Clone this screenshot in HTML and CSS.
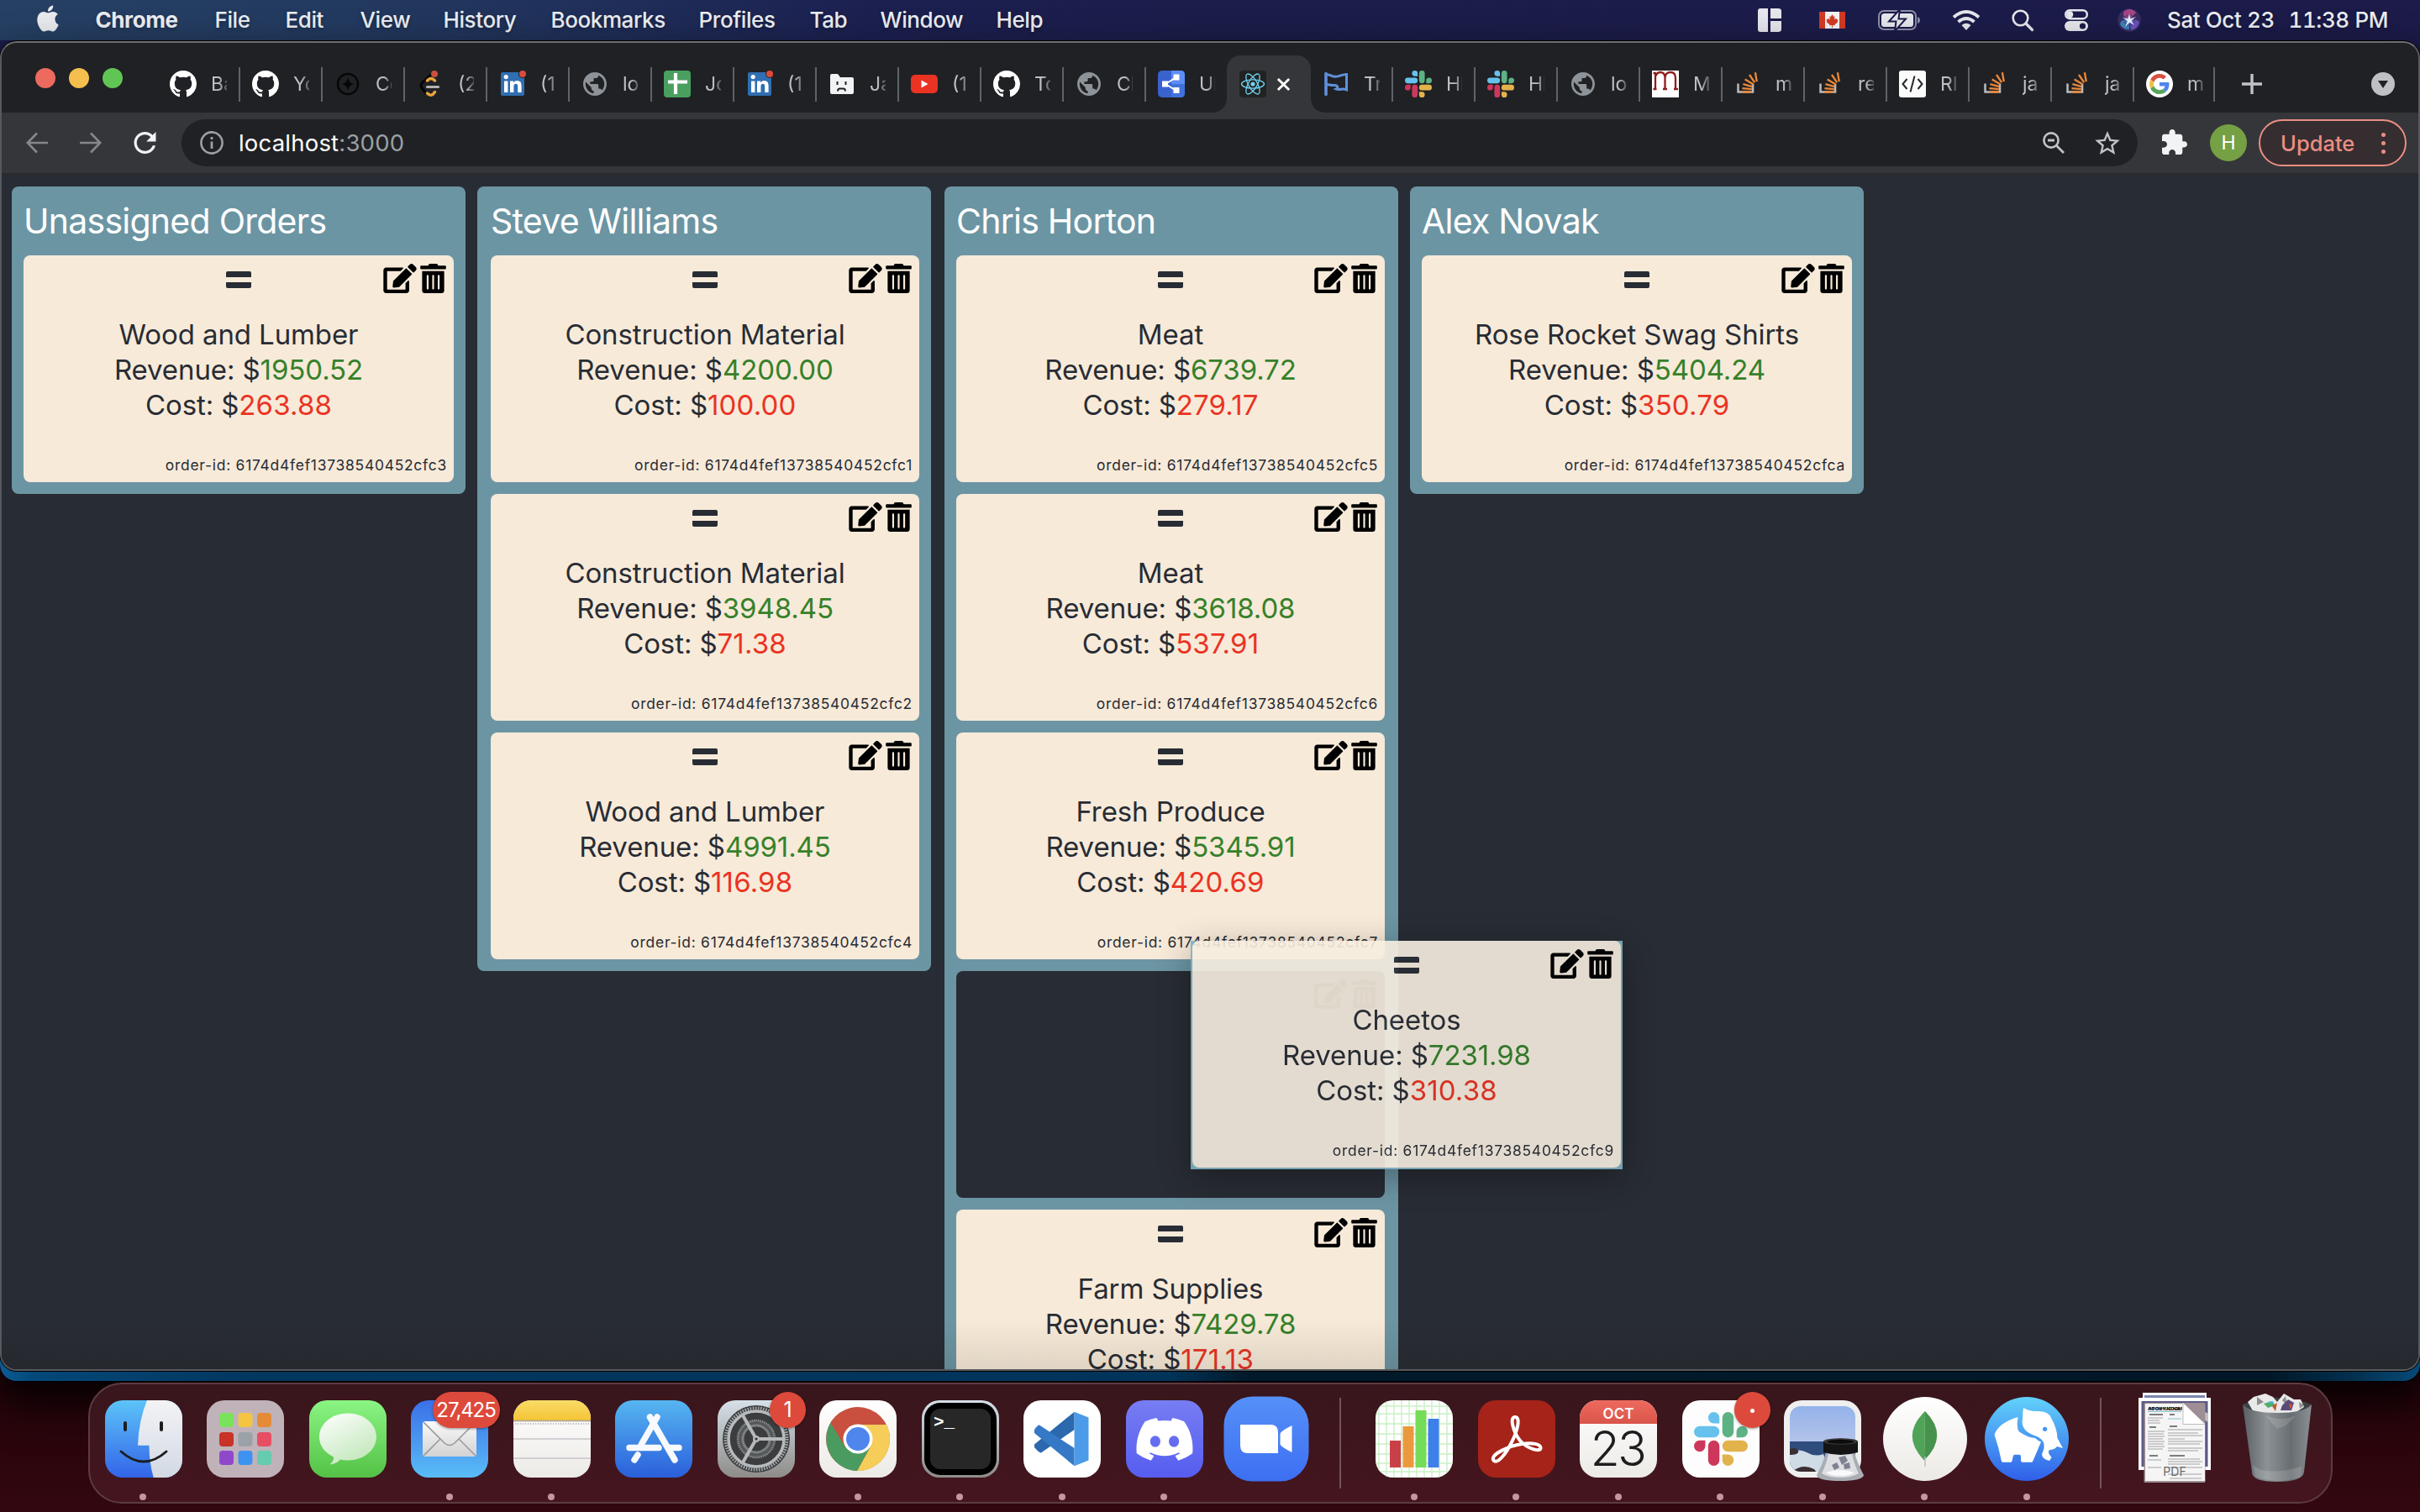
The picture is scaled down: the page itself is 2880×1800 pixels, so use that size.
FILE: index.html
```html
<!DOCTYPE html>
<html lang="en">
<head>
<meta charset="utf-8">
<title>Order board</title>
<link rel="stylesheet" href="styles.css">
</head>
<body>
<svg class="defs" width="0" height="0" aria-hidden="true">
  <defs>
    <linearGradient id="gBlueUp" x1="0" y1="0" x2="0" y2="1"><stop offset="0" stop-color="#5cc4f8"/><stop offset="1" stop-color="#3364e8"/></linearGradient>
    <linearGradient id="gPale" x1="0" y1="0" x2="0" y2="1"><stop offset="0" stop-color="#f3f3f5"/><stop offset="1" stop-color="#d2d9e4"/></linearGradient>
    <linearGradient id="gGreen" x1="0" y1="0" x2="0" y2="1"><stop offset="0" stop-color="#8af583"/><stop offset="1" stop-color="#54c146"/></linearGradient>
    <linearGradient id="gBubble" x1="0" y1="0" x2=".6" y2="1"><stop offset="0" stop-color="#fff"/><stop offset="1" stop-color="#c4e8bd"/></linearGradient>
    <linearGradient id="gMail" x1="0" y1="0" x2="0" y2="1"><stop offset="0" stop-color="#3a6fe8"/><stop offset="1" stop-color="#59bdf7"/></linearGradient>
    <linearGradient id="gEnv" x1="0" y1="0" x2="0" y2="1"><stop offset="0" stop-color="#fafafa"/><stop offset="1" stop-color="#d2d2d4"/></linearGradient>
    <linearGradient id="gNote" x1="0" y1="0" x2="0" y2="1"><stop offset="0" stop-color="#f9dc67"/><stop offset="1" stop-color="#f4c436"/></linearGradient>
    <linearGradient id="gStore" x1="0" y1="0" x2="0" y2="1"><stop offset="0" stop-color="#56b6f1"/><stop offset="1" stop-color="#2a5fdb"/></linearGradient>
    <linearGradient id="gGrey" x1="0" y1="0" x2="0" y2="1"><stop offset="0" stop-color="#d5e0e8"/><stop offset="1" stop-color="#8e8c89"/></linearGradient>
    <linearGradient id="gDiscord" x1="0" y1="0" x2="0" y2="1"><stop offset="0" stop-color="#777df2"/><stop offset="1" stop-color="#565df0"/></linearGradient>
    <linearGradient id="gZoom" x1="0" y1="0" x2="0" y2="1"><stop offset="0" stop-color="#5590f8"/><stop offset="1" stop-color="#3d6ff2"/></linearGradient>
    <linearGradient id="gPaper" x1="0" y1="0" x2="0" y2="1"><stop offset="0" stop-color="#fff"/><stop offset="1" stop-color="#eceae6"/></linearGradient>
    <linearGradient id="gCal" x1="0" y1="0" x2="0" y2="1"><stop offset="0" stop-color="#ee6a5f"/><stop offset="1" stop-color="#d9554a"/></linearGradient>
    <linearGradient id="gEle" x1="0" y1="0" x2="0" y2="1"><stop offset="0" stop-color="#62d2fb"/><stop offset="1" stop-color="#2f5fe8"/></linearGradient>
    <linearGradient id="gBin" x1="0" y1="0" x2="1" y2="0"><stop offset="0" stop-color="#5a5f63"/><stop offset=".35" stop-color="#8c9296"/><stop offset=".7" stop-color="#686d71"/><stop offset="1" stop-color="#8a9094"/></linearGradient>
    <linearGradient id="gSky" x1="0" y1="0" x2="0" y2="1"><stop offset="0" stop-color="#94b3ea"/><stop offset="1" stop-color="#b4c3ea"/></linearGradient>
    <radialGradient id="gSiri"><stop offset="0" stop-color="#fff"/><stop offset=".3" stop-color="#8fb9e8"/><stop offset=".65" stop-color="#5a4fa0"/><stop offset="1" stop-color="#2a2350"/></radialGradient>
    <clipPath id="squircle"><rect x="8" y="8" width="92" height="92" rx="21"/></clipPath>
    <clipPath id="photo"><rect x="15" y="15" width="78" height="78" rx="13"/></clipPath>

    <symbol id="github" viewBox="0 0 16 16"><path fill="#fff" d="M8 0C3.58 0 0 3.58 0 8c0 3.54 2.29 6.53 5.47 7.59.4.07.55-.17.55-.38 0-.19-.01-.82-.01-1.49-2.01.37-2.53-.49-2.69-.94-.09-.23-.48-.94-.82-1.13-.28-.15-.68-.52-.01-.53.63-.01 1.08.58 1.23.82.72 1.21 1.87.87 2.33.66.07-.52.28-.87.51-1.07-1.78-.2-3.64-.89-3.64-3.95 0-.87.31-1.59.82-2.15-.08-.2-.36-1.02.08-2.12 0 0 .67-.21 2.2.82.64-.18 1.32-.27 2-.27.68 0 1.36.09 2 .27 1.53-1.04 2.2-.82 2.2-.82.44 1.1.16 1.92.08 2.12.51.56.82 1.27.82 2.15 0 3.07-1.87 3.75-3.65 3.95.29.25.54.73.54 1.48 0 1.07-.01 1.93-.01 2.2 0 .21.15.46.55.38A8.013 8.013 0 0016 8c0-4.42-3.58-8-8-8z"/></symbol>
    <symbol id="compass" viewBox="0 0 32 32"><circle cx="16" cy="16" r="12" fill="none" stroke="#060606" stroke-width="2.4"/><path fill="#060606" d="M16 8q1 7 7 8q-6 1-7 8q-1-7-7-8q6-1 7-8z"/></symbol>
    <symbol id="leetcode" viewBox="0 0 32 32"><path d="M19 3L6.500 14.500q-3 3.500 0 7L12 28" fill="none" stroke="#050505" stroke-width="3"/><path d="M12.500 12q4.500-5 9 0M12.500 27q5 5 9-1.500" fill="none" stroke="#e8a33d" stroke-width="3.400" stroke-linecap="round"/><path d="M12.500 19.500h13" stroke="#b3b3b3" stroke-width="3.200" stroke-linecap="round"/><circle cx="21" cy="4" r="4" fill="#c8503f"/></symbol>
    <symbol id="linkedin" viewBox="0 0 32 32"><rect x="2" y="2" width="28" height="28" rx="2" fill="#2f6fb2"/><circle cx="8.2" cy="7.6" r="2.6" fill="#fff"/><path fill="#fff" d="M6 12.4h4.4V26H6zM13 12.4h4.2v1.9q1.400-2.300 4.400-2.300 5 0 5 6V26h-4.400v-7q0-3.200-2.300-3.200-2.500 0-2.500 3.200v7H13z"/><circle cx="28" cy="4" r="5" fill="#202124"/><circle cx="28" cy="4" r="4" fill="#dd4b3b"/></symbol>
    <symbol id="globe" viewBox="0 0 24 24"><path fill="#8d9398" transform="translate(12 12) scale(1.05) translate(-12 -12)" d="M12 2C6.480 2 2 6.480 2 12s4.480 10 10 10 10-4.480 10-10S17.520 2 12 2zm-1 17.930c-3.950-.49-7-3.850-7-7.930 0-.62.08-1.210.21-1.790L9 15v1c0 1.100.9 2 2 2v1.930zm6.900-2.540c-.26-.81-1-1.390-1.900-1.390h-1v-3c0-.55-.45-1-1-1H8v-2h2c.55 0 1-.45 1-1V7h2c1.100 0 2-.9 2-2v-.41c2.930 1.190 5 4.060 5 7.410 0 2.080-.8 3.970-2.100 5.390z"/></symbol>
    <symbol id="sheet" viewBox="0 0 32 32"><rect width="32" height="32" rx="4" fill="#4a9f5f"/><path d="M14 3v25M5 13.500h23" stroke="#fff" stroke-width="4.200"/></symbol>
    <symbol id="sadfile" viewBox="0 0 32 32"><path fill="#f1f3f4" d="M2 6q0-2 2-2h7l3 4h14q2 0 2 2v16q0 2-2 2H4q-2 0-2-2z"/><path d="M10.500 13v4M20.500 13v4M11 24.500q0-3 2.500-3h4q2.500 0 2.500 3" fill="none" stroke="#202124" stroke-width="2"/></symbol>
    <symbol id="youtube" viewBox="0 0 32 32"><rect y="5" width="32" height="22" rx="5" fill="#ea3323"/><path fill="#fff" d="M12.500 11.500l8 4.500-8 4.500z"/></symbol>
    <symbol id="share" viewBox="0 0 32 32"><rect width="32" height="32" rx="5" fill="#3a62cf"/><path d="M16 0h11q5 0 5 5v11H16z" fill="#5d8df6"/><path d="M16 16h16v11q0 5-5 5H16z" fill="#3f72dc"/><path d="M22 8L9 16l13 8" fill="none" stroke="#fff" stroke-width="2"/><path fill="#fff" d="M5 12.500h7v7H5zM18.500 4.500h7v7h-7zM18.500 20h7v7h-7z"/></symbol>
    <symbol id="react" viewBox="0 0 32 32"><rect width="32" height="32" rx="4" fill="#222"/><g fill="none" stroke="#6fd3f2" stroke-width="1.300"><ellipse cx="16" cy="16" rx="13.500" ry="5.200"/><ellipse cx="16" cy="16" rx="13.500" ry="5.200" transform="rotate(60 16 16)"/><ellipse cx="16" cy="16" rx="13.500" ry="5.200" transform="rotate(120 16 16)"/></g><circle cx="16" cy="16" r="2.600" fill="#6fd3f2"/></symbol>
    <symbol id="flag" viewBox="0 0 32 32"><path d="M4 28.500V3.500" stroke="#6090dc" stroke-width="3.600" stroke-linecap="round"/><path d="M4 4.500c5 0 6.500 2.800 11.500 2.800S23 4.500 28.500 4.500v18.300c-5-2.200-8 1.200-12.500-.8 4-2 1-5-2.500-4.500-4 .5-5.500-1-9.500-1" fill="none" stroke="#6090dc" stroke-width="3"/></symbol>
    <symbol id="slack" viewBox="0 0 24 24"><path fill="#ce375c" d="M5.042 15.165a2.528 2.528 0 0 1-2.520 2.523A2.528 2.528 0 0 1 0 15.165a2.527 2.527 0 0 1 2.522-2.520h2.520v2.520zM6.313 15.165a2.527 2.527 0 0 1 2.521-2.520 2.527 2.527 0 0 1 2.521 2.520v6.313A2.528 2.528 0 0 1 8.834 24a2.528 2.528 0 0 1-2.521-2.522v-6.313z"/><path fill="#66c2ec" d="M8.834 5.042a2.528 2.528 0 0 1-2.521-2.520A2.528 2.528 0 0 1 8.834 0a2.528 2.528 0 0 1 2.521 2.522v2.520H8.834zM8.834 6.313a2.528 2.528 0 0 1 2.521 2.521 2.528 2.528 0 0 1-2.521 2.521H2.522A2.528 2.528 0 0 1 0 8.834a2.528 2.528 0 0 1 2.522-2.521h6.312z"/><path fill="#5cb283" d="M18.956 8.834a2.528 2.528 0 0 1 2.522-2.521A2.528 2.528 0 0 1 24 8.834a2.528 2.528 0 0 1-2.522 2.521h-2.522V8.834zM17.688 8.834a2.528 2.528 0 0 1-2.523 2.521 2.527 2.527 0 0 1-2.520-2.521V2.522A2.527 2.527 0 0 1 15.165 0a2.528 2.528 0 0 1 2.523 2.522v6.312z"/><path fill="#e2b34c" d="M15.165 18.956a2.528 2.528 0 0 1 2.523 2.522A2.528 2.528 0 0 1 15.165 24a2.527 2.527 0 0 1-2.520-2.522v-2.522h2.520zM15.165 17.688a2.527 2.527 0 0 1-2.520-2.523 2.526 2.526 0 0 1 2.520-2.520h6.313A2.527 2.527 0 0 1 24 15.165a2.528 2.528 0 0 1-2.522 2.523h-6.313z"/></symbol>
    <symbol id="mfile" viewBox="0 0 32 32"><rect width="32" height="32" fill="#fff"/><path d="M4 2v20M1.500 3H4M4 7q2-5 6-5 5 0 5.500 6v14M15.500 8q1-6 6.500-6 6 0 6 7v13M1.500 22h4M13 22h5M26 22h5" fill="none" stroke="#8d1e1c" stroke-width="2.300"/></symbol>
    <symbol id="so" viewBox="0 0 24 24"><path fill="#b9bbbd" d="M15 15v7H3v-7H1v9h16v-9z" transform="translate(1.500 -2.500) scale(.94)"/><path fill="#e9873a" transform="translate(2.500 1.500) scale(.88)" d="M15 21h-10v-2h10v2zm6-11.665l-1.621-9.335-1.993.346 1.620 9.335 1.994-.346zm-5.964 6.937l-9.746-.975-.186 2.016 9.755.879.177-1.920zm.538-2.587l-9.276-2.608-.526 1.954 9.306 2.500.496-1.846zm1.204-2.413l-8.297-4.864-1.029 1.743 8.298 4.865 1.028-1.744zm1.866-1.467l-5.339-7.829-1.672 1.140 5.339 7.829 1.672-1.140z"/></symbol>
    <symbol id="code" viewBox="0 0 32 32"><rect width="32" height="32" rx="3" fill="#fbfbfb"/><path d="M9.500 10L4.500 16l5 6M22.500 10l5 6-5 6M18.500 6.500l-5 19" fill="none" stroke="#26282b" stroke-width="2"/></symbol>
    <symbol id="google" viewBox="0 0 32 32"><circle cx="16" cy="16" r="16" fill="#fff"/><g transform="translate(4 4) scale(.5)"><path fill="#d94f3e" d="M24 9.500c3.540 0 6.710 1.220 9.210 3.600l6.850-6.850C35.900 2.380 30.470 0 24 0 14.620 0 6.510 5.380 2.560 13.220l7.980 6.190C12.430 13.720 17.740 9.500 24 9.500z"/><path fill="#5384ec" d="M46.980 24.550c0-1.570-.15-3.090-.38-4.550H24v9.020h12.940c-.58 2.960-2.260 5.480-4.780 7.180l7.730 6c4.510-4.180 7.090-10.360 7.090-17.650z"/><path fill="#f2be42" d="M10.530 28.590c-.48-1.450-.76-2.990-.76-4.590s.27-3.140.76-4.590l-7.980-6.190C.92 16.460 0 20.120 0 24c0 3.880.92 7.540 2.560 10.780l7.970-6.190z"/><path fill="#58a55c" d="M24 48c6.480 0 11.930-2.130 15.890-5.810l-7.730-6c-2.150 1.450-4.920 2.300-8.160 2.300-6.260 0-11.570-4.220-13.470-9.910l-7.980 6.190C6.510 42.620 14.620 48 24 48z"/></g></symbol>

    <symbol id="edit" viewBox="0 0 576 512"><path d="M402.600 83.200l90.200 90.200c3.800 3.800 3.800 10 0 13.800L274.400 405.600l-92.800 10.300c-12.400 1.400-22.900-9.100-21.500-21.500l10.300-92.800L388.800 83.200c3.800-3.800 10-3.800 13.800 0zm162-22.900l-48.800-48.800c-15.200-15.200-39.900-15.200-55.200 0l-35.400 35.400c-3.800 3.800-3.800 10 0 13.800l90.200 90.200c3.800 3.800 10 3.800 13.800 0l35.400-35.400c15.200-15.300 15.200-40 0-55.200zM384 346.200V448H64V128h229.800c3.200 0 6.200-1.300 8.500-3.500l40-40c7.600-7.600 2.200-20.500-8.500-20.500H48C21.500 64 0 85.500 0 112v352c0 26.500 21.500 48 48 48h352c26.500 0 48-21.500 48-48V306.200c0-10.700-12.900-16-20.500-8.500l-40 40c-2.200 2.300-3.500 5.300-3.500 8.500z"/></symbol>
    <symbol id="trash" viewBox="0 0 448 512"><path d="M32 464a48 48 0 0 0 48 48h288a48 48 0 0 0 48-48V128H32zm272-256a16 16 0 0 1 32 0v224a16 16 0 0 1-32 0zm-96 0a16 16 0 0 1 32 0v224a16 16 0 0 1-32 0zm-96 0a16 16 0 0 1 32 0v224a16 16 0 0 1-32 0zM432 32H312l-9.400-18.700A24 24 0 0 0 281.100 0H166.800a23.720 23.720 0 0 0-21.400 13.300L136 32H16A16 16 0 0 0 0 48v32a16 16 0 0 0 16 16h416a16 16 0 0 0 16-16V48a16 16 0 0 0-16-16z"/></symbol>
  </defs>
</svg>

<header class="menubar">
  <svg class="apple" viewBox="2 0 20 24"><path fill="#e9ebef" d="M12.152 6.896c-.948 0-2.415-1.078-3.960-1.040-2.040.027-3.910 1.183-4.961 3.014-2.117 3.675-.546 9.103 1.519 12.090 1.013 1.454 2.208 3.090 3.792 3.039 1.520-.065 2.090-.987 3.935-.987 1.831 0 2.350.987 3.960.948 1.637-.026 2.676-1.480 3.676-2.948 1.156-1.688 1.636-3.325 1.662-3.415-.039-.013-3.182-1.221-3.220-4.857-.026-3.040 2.480-4.494 2.597-4.559-1.429-2.090-3.623-2.324-4.390-2.376-2-.156-3.675 1.090-4.610 1.090zM15.530 3.830c.843-1.012 1.400-2.427 1.245-3.830-1.207.052-2.662.805-3.532 1.818-.78.896-1.454 2.338-1.273 3.714 1.338.104 2.715-.688 3.559-1.701"/></svg>
  <nav class="menus"><b>Chrome</b><span>File</span><span>Edit</span><span>View</span><span>History</span><span>Bookmarks</span><span>Profiles</span><span>Tab</span><span>Window</span><span>Help</span></nav>
  <div class="status">
    <svg class="st-split" viewBox="0 0 30 28"><path fill="#e6e7ec" d="M4 0h9v28H4q-3 0-3-3V3q0-3 3-3zM16 0h9q4 0 4 3v9H16zM16 15h13v10q0 3-4 3h-9z"/></svg>
    <svg class="st-flag" viewBox="0 0 31 20"><rect width="31" height="20" fill="#f4f4f4"/><path fill="#d43a24" d="M0 0h7v20H0zM24 0h7v20h-7zM15.500 3l1.500 3 1.500-.7-.5 4 2.200-1.600.6 1.500 1.700-.2-.8 2.300.8.800-4 3.200.2 1-2.800-.3v3h-.9v-3l-2.800.3.200-1-4-3.200.8-.8-.8-2.300 1.700.2.600-1.500 2.200 1.600-.5-4 1.500.7z"/></svg>
    <svg class="st-batt" viewBox="0 0 50 24"><rect x="1" y="1" width="44" height="22" rx="6" fill="none" stroke="#8d8da6" stroke-width="2"/><path d="M47 8v8q3-1 3-4t-3-4z" fill="#8d8da6"/><rect x="4" y="4" width="38" height="16" rx="3.500" fill="#e6e7ec"/><path d="M26 -1L13 13.500h8.500L20 25 33 10.500h-8.500z" fill="#e6e7ec" stroke="#1c1b4a" stroke-width="2"/></svg>
    <svg class="st-wifi" viewBox="0 0 34 24"><path d="M2 8.500q15-13 30 0M7.500 14q9.500-8 19 0" fill="none" stroke="#e6e7ec" stroke-width="3.800"/><path fill="#e6e7ec" d="M11.500 18q5.500-4.500 11 0L17 24z"/></svg>
    <svg class="st-find" viewBox="0 0 26 26"><circle cx="10.500" cy="10.500" r="8.800" fill="none" stroke="#e6e7ec" stroke-width="2.600"/><path d="M17 17l7.500 7.500" stroke="#e6e7ec" stroke-width="3.200" stroke-linecap="round"/></svg>
    <svg class="st-ctl" viewBox="0 0 28 26"><rect x="1.200" y="1.200" width="25.600" height="10" rx="5" fill="none" stroke="#e6e7ec" stroke-width="2.400"/><circle cx="6.200" cy="6.200" r="4" fill="#e6e7ec"/><rect y="14" width="28" height="12" rx="6" fill="#e6e7ec"/><circle cx="21.500" cy="20" r="3.600" fill="#1c1b4a"/></svg>
    <svg class="st-siri" viewBox="0 0 28 28"><circle cx="14" cy="14" r="13.800" fill="#3a2d62"/><path fill="#c24b8f" opacity=".8" d="M14 14Q4 10 8 3q8-5 14 2z"/><path fill="#3f8fcb" opacity=".85" d="M14 14Q4 12 3 19q4 7 11 6z"/><path fill="#6f58c9" opacity=".9" d="M14 14q10-2 12 3-3 8-10 9z"/><circle cx="14" cy="14" r="7" fill="url(#gSiri)" opacity=".4"/><path fill="#e8f4ff" d="M14 6l1.200 6.500L22 10l-5.500 4.500L20 20l-5.500-3.500L9 22l3-7L6 11l6.500 1.500z"/></svg>
    <span class="clock"><span>Sat Oct 23</span><span>11:38 PM</span></span>
  </div>
</header>

<div class="backwin"></div>
<main class="window">
  <div class="tabstrip">
    <div class="lights"><i class="red"></i><i class="amber"></i><i class="green"></i></div>
    <div class="tabs">
      <div class="tab"><svg><use href="#github"/></svg><span>Ba</span></div>
      <div class="tab"><svg><use href="#github"/></svg><span>Yo</span></div>
      <div class="tab"><svg><use href="#compass"/></svg><span>Co</span></div>
      <div class="tab"><svg><use href="#leetcode"/></svg><span>(2</span></div>
      <div class="tab"><svg><use href="#linkedin"/></svg><span>(1</span></div>
      <div class="tab"><svg><use href="#globe"/></svg><span>lo</span></div>
      <div class="tab"><svg><use href="#sheet"/></svg><span>Jo</span></div>
      <div class="tab"><svg><use href="#linkedin"/></svg><span>(1</span></div>
      <div class="tab"><svg><use href="#sadfile"/></svg><span>Ja</span></div>
      <div class="tab"><svg><use href="#youtube"/></svg><span>(1</span></div>
      <div class="tab"><svg><use href="#github"/></svg><span>To</span></div>
      <div class="tab"><svg><use href="#globe"/></svg><span>Cl</span></div>
      <div class="tab noline"><svg><use href="#share"/></svg><span>Ul</span></div>
      <div class="tab active"><svg><use href="#react"/></svg><svg class="close" viewBox="0 0 18 18"><path d="M2 2l14 14M16 2L2 16" stroke="#fff" stroke-width="3"/></svg></div>
      <div class="tab"><svg><use href="#flag"/></svg><span>Tr</span></div>
      <div class="tab"><svg><use href="#slack"/></svg><span>Hl</span></div>
      <div class="tab"><svg><use href="#slack"/></svg><span>Hl</span></div>
      <div class="tab"><svg><use href="#globe"/></svg><span>lo</span></div>
      <div class="tab"><svg><use href="#mfile"/></svg><span>M</span></div>
      <div class="tab"><svg><use href="#so"/></svg><span>m</span></div>
      <div class="tab"><svg><use href="#so"/></svg><span>re</span></div>
      <div class="tab"><svg><use href="#code"/></svg><span>RI</span></div>
      <div class="tab"><svg><use href="#so"/></svg><span>ja</span></div>
      <div class="tab"><svg><use href="#so"/></svg><span>ja</span></div>
      <div class="tab last"><svg><use href="#google"/></svg><span>m</span></div>
    </div>
    <svg class="newtab" viewBox="0 0 24 24"><path d="M12 0v24M0 12h24" stroke="#c0c3c7" stroke-width="3.400"/></svg>
    <svg class="tabmenu" viewBox="0 0 28 28"><circle cx="14" cy="14" r="14" fill="#bdc1c6"/><path d="M8 10h12l-6 9z" fill="#202124"/></svg>
  </div>

  <div class="toolbar">
    <svg class="nav back" viewBox="0 0 26 26"><path d="M26 13H2.500M13 1.500L1.800 13 13 24.500" fill="none" stroke="#85878a" stroke-width="2.600"/></svg>
    <svg class="nav fwd" viewBox="0 0 26 26"><path d="M0 13h23.500M13 1.500L24.200 13 13 24.500" fill="none" stroke="#85878a" stroke-width="2.600"/></svg>
    <svg class="nav reload" viewBox="4 4 16 16"><path fill="#f1f3f4" d="M17.650 6.350C16.200 4.900 14.210 4 12 4c-4.420 0-7.990 3.580-7.990 8s3.570 8 7.990 8c3.730 0 6.840-2.550 7.730-6h-2.080c-.82 2.330-3.040 4-5.650 4-3.310 0-6-2.690-6-6s2.690-6 6-6c1.660 0 3.140.69 4.220 1.780L13 11h7V4l-2.350 2.350z"/></svg>
    <div class="omnibox">
      <svg class="info" viewBox="0 0 28 28"><circle cx="14" cy="14" r="12.600" fill="none" stroke="#9aa0a6" stroke-width="2.600"/><path d="M14 12.500V21M14 7v3" stroke="#9aa0a6" stroke-width="2.800"/></svg>
      <span class="url">localhost<em>:3000</em></span>
      <svg class="zoomout" viewBox="0 0 26 26"><circle cx="10" cy="10" r="8.600" fill="none" stroke="#c0c3c7" stroke-width="2.600"/><path d="M16 16l9 9M6 10h8" stroke="#c0c3c7" stroke-width="2.800"/></svg>
      <svg class="star" viewBox="2 2 20 19"><path fill="#c0c3c7" d="M22 9.240l-7.190-.62L12 2 9.190 8.630 2 9.240l5.460 4.730L5.820 21 12 17.270 18.180 21l-1.630-7.030L22 9.240zM12 15.400l-3.760 2.270 1-4.280-3.320-2.880 4.380-.38L12 6.100l1.710 4.040 4.380.38-3.320 2.880 1 4.280L12 15.400z"/></svg>
    </div>
    <svg class="puzzle" viewBox="2 1 21 21"><path fill="#f1f3f4" d="M20.500 11H19V7c0-1.100-.9-2-2-2h-4V3.500C13 2.120 11.880 1 10.500 1S8 2.120 8 3.500V5H4c-1.100 0-1.990.9-1.990 2v3.800H3.500c1.490 0 2.700 1.210 2.700 2.700s-1.210 2.700-2.700 2.700H2V20c0 1.100.9 2 2 2h3.800v-1.500c0-1.490 1.210-2.700 2.700-2.700 1.490 0 2.700 1.210 2.700 2.700V22H17c1.100 0 2-.9 2-2v-4h1.500c1.380 0 2.500-1.120 2.500-2.500S21.880 11 20.500 11z"/></svg>
    <span class="avatar">H</span>
    <span class="update">Update<i></i></span>
  </div>

  <div class="page">
    <section class="column">
      <h2>Unassigned Orders</h2>
      <article class="card"><div class="tools"><i class="grip"></i><svg class="ed"><use href="#edit"/></svg><svg class="tr"><use href="#trash"/></svg></div><p>Wood and Lumber</p><p>Revenue: $<span class="rev">1950.52</span></p><p>Cost: $<span class="cost">263.88</span></p><small>order-id: 6174d4fef13738540452cfc3</small></article>
    </section>
    <section class="column">
      <h2>Steve Williams</h2>
      <article class="card"><div class="tools"><i class="grip"></i><svg class="ed"><use href="#edit"/></svg><svg class="tr"><use href="#trash"/></svg></div><p>Construction Material</p><p>Revenue: $<span class="rev">4200.00</span></p><p>Cost: $<span class="cost">100.00</span></p><small>order-id: 6174d4fef13738540452cfc1</small></article>
      <article class="card"><div class="tools"><i class="grip"></i><svg class="ed"><use href="#edit"/></svg><svg class="tr"><use href="#trash"/></svg></div><p>Construction Material</p><p>Revenue: $<span class="rev">3948.45</span></p><p>Cost: $<span class="cost">71.38</span></p><small>order-id: 6174d4fef13738540452cfc2</small></article>
      <article class="card"><div class="tools"><i class="grip"></i><svg class="ed"><use href="#edit"/></svg><svg class="tr"><use href="#trash"/></svg></div><p>Wood and Lumber</p><p>Revenue: $<span class="rev">4991.45</span></p><p>Cost: $<span class="cost">116.98</span></p><small>order-id: 6174d4fef13738540452cfc4</small></article>
    </section>
    <section class="column">
      <h2>Chris Horton</h2>
      <article class="card"><div class="tools"><i class="grip"></i><svg class="ed"><use href="#edit"/></svg><svg class="tr"><use href="#trash"/></svg></div><p>Meat</p><p>Revenue: $<span class="rev">6739.72</span></p><p>Cost: $<span class="cost">279.17</span></p><small>order-id: 6174d4fef13738540452cfc5</small></article>
      <article class="card"><div class="tools"><i class="grip"></i><svg class="ed"><use href="#edit"/></svg><svg class="tr"><use href="#trash"/></svg></div><p>Meat</p><p>Revenue: $<span class="rev">3618.08</span></p><p>Cost: $<span class="cost">537.91</span></p><small>order-id: 6174d4fef13738540452cfc6</small></article>
      <article class="card"><div class="tools"><i class="grip"></i><svg class="ed"><use href="#edit"/></svg><svg class="tr"><use href="#trash"/></svg></div><p>Fresh Produce</p><p>Revenue: $<span class="rev">5345.91</span></p><p>Cost: $<span class="cost">420.69</span></p><small>order-id: 6174d4fef13738540452cfc7</small></article>
      <article class="card slot"><div class="tools"><i class="grip"></i><svg class="ed"><use href="#edit"/></svg><svg class="tr"><use href="#trash"/></svg></div></article>
      <article class="card"><div class="tools"><i class="grip"></i><svg class="ed"><use href="#edit"/></svg><svg class="tr"><use href="#trash"/></svg></div><p>Farm Supplies</p><p>Revenue: $<span class="rev">7429.78</span></p><p>Cost: $<span class="cost">171.13</span></p></article>
    </section>
    <section class="column">
      <h2>Alex Novak</h2>
      <article class="card"><div class="tools"><i class="grip"></i><svg class="ed"><use href="#edit"/></svg><svg class="tr"><use href="#trash"/></svg></div><p>Rose Rocket Swag Shirts</p><p>Revenue: $<span class="rev">5404.24</span></p><p>Cost: $<span class="cost">350.79</span></p><small>order-id: 6174d4fef13738540452cfca</small></article>
    </section>
    <div class="dragged">
      <article class="card"><div class="tools"><i class="grip"></i><svg class="ed"><use href="#edit"/></svg><svg class="tr"><use href="#trash"/></svg></div><p>Cheetos</p><p>Revenue: $<span class="rev">7231.98</span></p><p>Cost: $<span class="cost">310.38</span></p><small>order-id: 6174d4fef13738540452cfc9</small></article>
    </div>
  </div>
</main>

<footer class="dock">
  <div class="app on"><svg viewBox="0 0 108 108"><g clip-path="url(#squircle)"><rect x="8" y="8" width="92" height="92" fill="url(#gBlueUp)"/><path fill="url(#gPale)" d="M58 8Q48 32 47 61.700H60.500Q60.500 82 65.700 100H100V8z"/></g><path d="M32 35v8M75 35v8" stroke="#1d1d1f" stroke-width="4" stroke-linecap="round"/><path d="M27 69q27 24 54 0" fill="none" stroke="#1d1d1f" stroke-width="3" stroke-linecap="round"/></svg></div>
  <div class="app"><svg viewBox="0 0 108 108"><rect x="8" y="8" width="92" height="92" rx="21" fill="#bfb3b9"/><g><rect x="23" y="23" width="17" height="17" rx="4" fill="#7be35b"/><rect x="45.500" y="23" width="17" height="17" rx="4" fill="#f4c443"/><rect x="68" y="23" width="17" height="17" rx="4" fill="#e58b38"/><rect x="23" y="46" width="17" height="17" rx="4" fill="#c83227"/><rect x="45.500" y="46" width="17" height="17" rx="4" fill="#9aa2a8"/><rect x="68" y="46" width="17" height="17" rx="4" fill="#e84e63"/><rect x="23" y="68" width="17" height="17" rx="4" fill="#9048ca"/><rect x="45.500" y="68" width="17" height="17" rx="4" fill="#3f93f0"/><rect x="68" y="68" width="17" height="17" rx="4" fill="#66cbb0"/></g></svg></div>
  <div class="app"><svg viewBox="0 0 108 108"><rect x="8" y="8" width="92" height="92" rx="21" fill="url(#gGreen)"/><path fill="url(#gBubble)" d="M54 23.500c19 0 34 12.500 34 28S73 79.500 54 79.500q-5 0-9-1-4 5-12.500 6 5-4 4.500-9Q20 67 20 51.500c0-15.500 15-28 34-28z"/></svg></div>
  <div class="app on"><svg viewBox="0 0 108 108"><rect x="8" y="8" width="92" height="92" rx="21" fill="url(#gMail)"/><rect x="22" y="33" width="64" height="42" rx="3" fill="url(#gEnv)"/><path d="M23 74l20-20M85 74L65 54M23 34l25 25q6 5 12 0l25-25" fill="none" stroke="#9b9b9d" stroke-width="1.600"/></svg><span class="badge">27,425</span></div>
  <div class="app on"><svg viewBox="0 0 108 108"><g clip-path="url(#squircle)"><rect x="8" y="8" width="92" height="92" fill="url(#gPaper)"/><rect x="8" y="8" width="92" height="24" fill="url(#gNote)"/><path d="M8 32.500h92" stroke="#a8a296" stroke-width="1.400"/><path d="M10 36h90" stroke="#bbb" stroke-width="2" stroke-dasharray="1.200 1.800"/><path d="M8 54h92M8 77h92" stroke="#d2d0d2" stroke-width="2"/></g></svg></div>
  <div class="app"><svg viewBox="0 0 108 108"><rect x="8" y="8" width="92" height="92" rx="21" fill="url(#gStore)"/><path d="M58 28L39 61M35 73l-4 6M49.500 28L79 79M25 64.500h35M73 64.500h11" fill="none" stroke="#f6f9fd" stroke-width="7.500" stroke-linecap="round"/></svg></div>
  <div class="app"><svg viewBox="0 0 108 108"><rect x="8" y="8" width="92" height="92" rx="21" fill="url(#gGrey)"/><circle cx="54" cy="54" r="40" fill="#3b3d3e"/><circle cx="54" cy="54" r="36.500" fill="none" stroke="#a4a8aa" stroke-width="4" stroke-dasharray="1.600 1.500"/><circle cx="54" cy="54" r="33" fill="none" stroke="#b7bbbe" stroke-width="3.500"/><circle cx="54" cy="54" r="22" fill="#555859" stroke="#8d9193" stroke-width="2.500" stroke-dasharray="1.500 1"/><circle cx="54" cy="54" r="16" fill="#3a3c3d" stroke="#7c8082" stroke-width="3"/><path d="M54 54h32M54 54L38 26M54 54L38 82" stroke="#b5b9bb" stroke-width="4"/><circle cx="54" cy="54" r="4" fill="#b5b9bb"/><circle cx="54" cy="54" r="1.600" fill="#333"/></svg><span class="badge one">1</span></div>
  <div class="app on"><svg viewBox="0 0 108 108"><rect x="8" y="8" width="92" height="92" rx="21" fill="url(#gPaper)"/><circle cx="54" cy="54" r="38" fill="#c9503f"/><path fill="#f5cd58" d="M54 37H88A38 38 0 0 1 53 92L69.500 62z"/><path fill="#4a9b60" d="M21.500 35A38 38 0 0 0 53 92l16-29L39 62z"/><path fill="#c9503f" d="M21.500 34.500L39 64V37H87A38 38 0 0 0 21.500 34.500z"/><circle cx="54" cy="54" r="17.500" fill="#fff"/><circle cx="54" cy="54" r="14" fill="#4e86ee"/></svg></div>
  <div class="app on"><svg viewBox="0 0 108 108"><rect x="8" y="8" width="92" height="92" rx="21" fill="url(#gGrey)"/><rect x="11" y="11" width="86" height="86" rx="19" fill="#000"/><rect x="18" y="18" width="72" height="72" rx="12" fill="#272727"/><text x="22" y="40" class="prompt">&gt;_</text></svg></div>
  <div class="app on"><svg viewBox="0 0 108 108"><rect x="8" y="8" width="92" height="92" rx="21" fill="#fff"/><path fill="#2b68ad" d="M68.600 21.700V43L29 70.500q-2 .5-8-6.500v-3.500z"/><path fill="#3579c6" d="M27 37.500L68.600 65v21.300L21 47v-4q4-6 6-5.500z"/><path fill="#4b9be9" d="M68.600 21.700L85.500 28.500v51L68.600 86.300z"/></svg></div>
  <div class="app on"><svg viewBox="0 0 108 108"><rect x="8" y="8" width="92" height="92" rx="21" fill="url(#gDiscord)"/><path fill="#fff" transform="translate(20.500 29) scale(.527)" d="M107.700,8.070A105.150,105.150,0,0,0,81.470,0a72.060,72.060,0,0,0-3.360,6.830A97.680,97.680,0,0,0,49,6.830,72.370,72.370,0,0,0,45.640,0,105.890,105.890,0,0,0,19.390,8.090C2.790,32.650-1.710,56.600.54,80.210h0A105.730,105.730,0,0,0,32.710,96.360,77.700,77.700,0,0,0,39.600,85.250a68.420,68.420,0,0,1-10.850-5.180c.91-.66,1.800-1.340,2.660-2a75.570,75.570,0,0,0,64.320,0c.87.710,1.760,1.390,2.660,2a68.680,68.680,0,0,1-10.870,5.190,77,77,0,0,0,6.890,11.100A105.250,105.250,0,0,0,126.600,80.220h0C129.240,52.840,122.090,29.110,107.700,8.070ZM42.450,65.690C36.180,65.690,31,60,31,53s5-12.740,11.430-12.740S54,46,53.890,53,48.840,65.690,42.450,65.690Zm42.240,0C78.410,65.690,73.250,60,73.250,53s5-12.740,11.440-12.740S96.230,46,96.120,53,91.080,65.690,84.690,65.690Z"/></svg></div>
  <div class="app"><svg viewBox="0 0 108 108"><rect x="3.500" y="3.500" width="101" height="101" rx="34" fill="url(#gZoom)"/><path fill="#fff" d="M23 37h36q9 0 9 9v25H32q-9 0-9-9zM84.500 38v32q-14-7-14-10V48q0-3 14-10z"/></svg></div>
  <i class="rule"></i>
  <div class="app on"><svg viewBox="0 0 108 108"><rect x="8" y="8" width="92" height="92" rx="21" fill="#fff"/><path clip-path="url(#squircle)" d="M12 8v92M21 8v92M30 8v92M39 8v92M48 8v92M57 8v92M66 8v92M75 8v92M84 8v92M93 8v92M8 15h92M8 24h92M8 36h92M8 48h92M8 60h92M8 72h92M8 83h92M8 93h92" stroke="#c9f0c4" stroke-width="1.400"/><rect x="25" y="56" width="13" height="32" fill="#c94049"/><rect x="40.500" y="39" width="13" height="49" fill="#ea9a3c"/><rect x="55.500" y="20" width="13" height="68" fill="#74dc58"/><rect x="70.500" y="30" width="13" height="58" fill="#3e80ea"/></svg></div>
  <div class="app on"><svg viewBox="0 0 108 108"><rect x="8" y="8" width="92" height="92" rx="21" fill="#a52318"/><path d="M27 80C20 73 46 62 60 60 72 58 83 60 82.500 65 82 70 67 66 58 56 50 46 45 28 52 28 59 28 55 44 48 58 42 70 32 84 27 80z" fill="none" stroke="#fff" stroke-width="4"/></svg></div>
  <div class="app on"><svg viewBox="0 0 108 108"><g clip-path="url(#squircle)"><rect x="8" y="8" width="92" height="92" fill="url(#gPaper)"/><rect x="8" y="8" width="92" height="28" fill="url(#gCal)"/></g><text x="54" y="30" class="month">OCT</text><text x="53" y="86" class="day">23</text></svg></div>
  <div class="app on"><svg viewBox="0 0 108 108"><rect x="8" y="8" width="92" height="92" rx="21" fill="#fdfdfd"/><use href="#slack" x="22" y="22" width="64" height="64"/></svg><span class="badge one mark"><i></i></span></div>
  <div class="app on"><svg viewBox="0 0 108 108"><rect x="8" y="8" width="92" height="92" rx="21" fill="#efefef"/><g clip-path="url(#photo)"><rect x="15" y="15" width="78" height="43" fill="url(#gSky)"/><rect x="15" y="57" width="78" height="38" fill="#2f4d7c"/><path fill="#cfdce6" d="M15 72q10-8 20-2t20 2l8 24H15z"/><path fill="#3a2f33" d="M15 66q8-3 10 2t-10 5zM18 93q12-10 26-3l4 5H18z"/></g><path fill="#a9adb4" d="M58 70h34q3 12 11 27-1 7-28 7t-28-7q8-15 11-27z"/><path fill="#dcdee2" d="M61 71h28q2 12 8 24-8 5-22 5t-22-5q6-12 8-24z"/><path fill="#fafafa" d="M58 94q17-6 34 0-6 4-17 4t-17-4z"/><path fill="#555b6d" opacity=".7" d="M73 76l8-2 3 6-7 5zM65 85l6-3 3 6-6 3zM79 84l7-2 1 7-7 1z"/><path fill="#141414" d="M55 57q20-7 41 0v13q-20 6-41 0z"/><ellipse cx="75.500" cy="57" rx="20.500" ry="3.800" fill="#3a3a3a"/><ellipse cx="75.500" cy="57.200" rx="16" ry="2.500" fill="#0c0c0c"/></svg></div>
  <div class="app on"><svg viewBox="0 0 108 108"><circle cx="54" cy="54" r="50" fill="url(#gPaper)"/><path fill="#4fa457" d="M54 21Q24 50 53 79.500z"/><path fill="#45934c" d="M54 21q29 29-1 58.500z"/><path fill="#b9bcb8" d="M53.200 75h1.600L54.600 87h-1.200z"/></svg></div>
  <div class="app on"><svg viewBox="0 0 108 108"><circle cx="54" cy="54" r="50" fill="url(#gEle)"/><path fill="#fff" d="M15.500 49Q20 35 43.500 28q-2 12 1 17Q54 52 64 53q3 3 7 4.500L61.500 80q-.5 1.700-2 1.700H49q-2 0-2-2v-5q0-2-2-2h-5q-2 0-2.300 2l-1 5q-.3 2-2 2h-9q-1.700 0-2-2Q21 65 15.500 49z"/><path fill="#fff" d="M50 17q7 4 14 4 16-1 19 8 7 12 7.500 24L97 65l-7-2q-3 4-9 4-3 3 2.600 9L81 80q-9-2-9-8 4-8 2-14-3-5-8-7-20-6-17-21 0-7 1-13z"/><circle cx="75.600" cy="42.300" r="2.600" fill="#4496f3"/></svg></div>
  <i class="rule"></i>
  <div class="app"><svg viewBox="0 0 108 108"><rect x="16" y="-1" width="76" height="20" fill="#fff"/><rect x="18" y="2" width="72" height="16" fill="#7c86b0"/><rect x="11" y="5" width="86" height="86" fill="#fff"/><rect x="14.500" y="9" width="79" height="78" fill="#5c5a86"/><path fill="#c8c3c4" d="M88 20l5.500 4v10L88 30z"/><rect x="17.500" y="11" width="73" height="95" rx="1.500" fill="#9d8f95"/><path fill="#f5f5f5" d="M19 12h45l26 24v68H19z"/><text x="22" y="19.500" class="cvname" textLength="41">ANTHONY HYUNDONG KIM</text><path d="M22 21.500h40M46 30h16" stroke="#6bb2c9" stroke-width=".8"/><path d="M24 25h16M48 25h6M24 40h8M48 39h9M24 74h10M48 74h18" stroke="#555" stroke-width="1.600"/><path d="M22 29h18M22 32h14M22 35h15M22 45h20M22 48h19M22 51h20M22 54h18M22 57h20M22 60h19M22 63h20M22 66h18M22 79h16M22 88h16M46 43h41M46 47h36M46 50h41M46 54h20M46 57h41M46 60h38M46 65h41M46 68h36M46 78h38M46 81h41M46 84h38M46 88h41M48 101h38M46 96h40" stroke="#a3a3a6" stroke-width="1"/><path fill="#fff" d="M64 11l26 25.500H64z"/><path d="M64 11v25.500h26" fill="none" stroke="#bdbdbd"/><text x="54" y="98" class="pdf">PDF</text></svg></div>
  <div class="app"><svg viewBox="0 0 108 108"><path fill="#3d4144" d="M13 13q41-16 82 0-4 10-41 10t-41-10z"/><path fill="#e9e9e9" d="M19 10l7 -6 14-4 9 4 5 6 8-10 12 7 8 0 4 9-12 8H27z"/><path fill="#8e8e8e" d="M30 4l8 6-8 4zM60 8l4-5 2 12zM80 10l6 4-5 4z"/><path fill="#4fae6a" d="M38 12l10-3 4 5-9 3z"/><path fill="#4ab7e6" d="M42 10l7-1 1 3z"/><path fill="#5a4a78" d="M60 14l7-7 7 4-3 9H58z"/><path fill="#c7592f" d="M48 15l6-4-2 10zM68 12l4 1-2 6z"/><path fill="url(#gBin)" d="M13 13q8 10 41 10t41-10L86 93q-1 12-32 12T24 93z"/><path fill="#fff" opacity=".14" d="M25 85q14 14 58 2l-1 12q-24 10-54 0zM40 26q20 8 36 0-10 14-22 16z"/></svg></div>
</footer>
</body>
</html>
```

FILE: styles.css
```css
* { box-sizing: border-box; }
html, body { margin: 0; height: 100%; overflow: hidden; }
body {
  position: relative;
  display: flex;
  flex-direction: column;
  width: 2880px;
  height: 1800px;
  font-family: Inter, "Liberation Sans", sans-serif;
  background: linear-gradient(#1c1b4a 0 100px, #240409 200px, #2b050c 1720px, #34070f 1800px);
}
.defs { position: absolute; }
svg { display: block; flex: none; overflow: visible; }
i, em { font-style: normal; }

/* system menu bar */
.menubar {
  display: flex;
  align-items: center;
  height: 48px;
  flex: none;
  padding: 0 38px 0 44px;
  color: #eceef2;
  font-size: 26px;
  font-weight: 500;
  letter-spacing: -.4px;
  line-height: 48px;
  background: linear-gradient(97deg, #264064 0, #233a60 14%, #20305a 24%, #1c2050 36%, #1b1d4a 50%, #1c1b4a 100%);
  text-shadow: 0 2px 4px rgba(0, 0, 0, .3);
}
.apple { width: 26px; height: 32px; margin-top: -4px; }
.menus {
  display: grid;
  grid-template-columns: 142px 84px 89px 99px 128px 176px 132px 84px 138px 80px;
  margin-left: 43.5px;
  white-space: nowrap;
}
.menus b { font-weight: 700; }
.status { display: flex; align-items: center; margin-left: auto; font-weight: 400; }
.st-split { width: 30px; height: 28px; margin-right: 44px; }
.st-flag { width: 31px; height: 20px; margin-right: 39px; }
.st-batt { width: 50px; height: 24px; margin-right: 38px; }
.st-wifi { width: 34px; height: 24px; margin-right: 37px; }
.st-find { width: 26px; height: 26px; margin-right: 37px; }
.st-ctl { width: 28px; height: 26px; margin-right: 35px; }
.st-siri { width: 28px; height: 28px; margin-right: 31px; }
.clock {
  display: flex;
  justify-content: space-between;
  width: 263px;
  font-weight: 450;
  font-variant-numeric: tabular-nums;
  white-space: nowrap;
}

/* window peeking out behind the browser */
.backwin {
  position: absolute;
  left: 0;
  top: 60px;
  width: 2880px;
  height: 1584px;
  border-radius: 20px;
  background: linear-gradient(90deg, #0a5c94 0, #034879 40px, #02375f 300px, #02345a 1390px, #011a2b 1480px, #011727 2700px, #02304f 2800px, #064a78 2880px);
  box-shadow: 0 1px 0 #000, 0 20px 50px 10px rgba(0, 0, 0, .85);
}

/* browser window */
.window {
  position: relative;
  display: flex;
  flex-direction: column;
  flex: none;
  height: 1583px;
  margin-top: 1px;
  border: 2px solid #56595d;
  border-top-color: #6c6e71;
  border-radius: 20px;
  background: #202124;
  box-shadow: 0 0 0 1px #000;
  overflow: hidden;
}
.tabstrip { display: flex; align-items: flex-end; height: 83px; flex: none; padding-left: 40px; }
.lights { display: flex; gap: 16px; width: 145px; padding-bottom: 29px; }
.lights i { width: 24px; height: 24px; border-radius: 50%; }
.red { background: #ed6a5f; }
.amber { background: #f5bf4f; }
.green { background: #61c555; }
.tabs { display: flex; }
.tab {
  position: relative;
  display: flex;
  align-items: center;
  width: 98px;
  height: 68px;
  padding-left: 15px;
}
.tab svg { width: 32px; height: 32px; }
.tab span {
  width: 19px;
  margin-left: 17px;
  overflow: hidden;
  color: #bdc1c6;
  font-size: 23px;
  line-height: 32px;
  white-space: nowrap;
  mask-image: linear-gradient(90deg, #000 50%, rgba(0, 0, 0, .3));
}
.tab::after {
  content: "";
  position: absolute;
  right: -1px;
  top: 14px;
  width: 2px;
  height: 41px;
  background: #5f6266;
}
.tab.last::after { right: 1px; }
.tab.noline::after { display: none; }
.tab.active { width: 100px; margin: 0 -1px; border-radius: 16px 16px 0 0; background: #35363a; }
.tab.active .close { width: 17px; height: 17px; margin-left: 12px; }
.tab.active::before, .tab.active::after {
  content: "";
  position: absolute;
  top: auto;
  bottom: 0;
  width: 16px;
  height: 16px;
}
.tab.active::before { left: -16px; background: radial-gradient(circle at 0 0, transparent 15.5px, #35363a 16px); }
.tab.active::after { right: -16px; background: radial-gradient(circle at 100% 0, transparent 15.5px, #35363a 16px); }
.newtab { width: 24px; height: 24px; margin: 0 130px 22px 31px; }
.tabmenu { width: 28px; height: 28px; margin-bottom: 20px; }

.toolbar {
  display: flex;
  align-items: center;
  height: 72px;
  flex: none;
  padding: 0 14px 0 29px;
  background: #35363a;
}
.nav { width: 26px; height: 26px; }
.fwd { margin-left: 38px; }
.reload { margin: 0 30px 0 38px; width: 27px; }
.omnibox {
  display: flex;
  align-items: center;
  width: 2328px;
  height: 56px;
  padding: 0 21px 0 22px;
  border-radius: 28px;
  background: #202124;
}
.info { width: 28px; height: 28px; }
.url { flex: 1; margin-left: 18px; color: #fff; font-size: 27.5px; letter-spacing: .2px; }
.url em { color: #9aa0a6; }
.zoomout { width: 26px; height: 26px; margin-right: 36px; }
.star { width: 30px; height: 28px; }
.puzzle { width: 30px; height: 30px; margin: -2px 27px 0 29px; }
.avatar {
  width: 44px;
  height: 44px;
  margin-right: 14px;
  border-radius: 50%;
  background: #76a044;
  color: #fff;
  font-size: 23px;
  line-height: 44px;
  text-align: center;
}
.update {
  display: flex;
  align-items: center;
  justify-content: space-between;
  width: 176px;
  height: 56px;
  padding: 0 23px 0 24px;
  border: 2px solid #ea8e83;
  border-radius: 28px;
  background: #352d30;
  color: #ea8e83;
  font-size: 25.5px;
  font-weight: 500;
}
.update i {
  width: 5px;
  height: 5px;
  border-radius: 50%;
  background: #ea8e83;
  box-shadow: 0 -10px #ea8e83, 0 10px #ea8e83;
}

/* order board */
.page {
  position: relative;
  display: flex;
  align-items: flex-start;
  gap: 14px;
  flex: 1;
  min-height: 0;
  padding: 14px 12px 0;
  border-top: 2px solid #2a2b2c;
  overflow: hidden;
  background: #282c34;
  color: #282c34;
}
.page::after {
  content: "";
  position: absolute;
  inset: auto 0 0 0;
  height: 60px;
  background: linear-gradient(transparent, rgba(20, 15, 0, .1));
}
.column {
  display: flex;
  flex-direction: column;
  gap: 14px;
  width: 540px;
  flex: none;
  padding: 0 14px 14px;
  border-radius: 8px;
  background: #6c95a3;
}
.column:nth-child(2) { padding-left: 16px; }
.column:nth-child(3) { margin-left: 2px; padding-right: 16px; }
.column h2 {
  height: 68px;
  margin: 0;
  color: #fff;
  font-size: 41px;
  font-weight: 400;
  line-height: 82px;
  letter-spacing: -.75px;
}
.card {
  display: flex;
  flex-direction: column;
  height: 270px;
  flex: none;
  padding: 10px 8px 0;
  border-radius: 8px;
  background: #f7ead9;
  text-align: center;
}
.tools {
  display: grid;
  grid-template-columns: 72px 1fr 30px 1fr 40px 32px;
  height: 63px;
  align-items: start;
}
.grip {
  grid-column: 3;
  height: 20px;
  margin-top: 9px;
  border: solid #282c34;
  border-width: 7px 0;
  border-radius: 2px;
}
.tools .ed { width: 40px; height: 35px; grid-column: 5; margin-left: -4px; }
.tools .tr { width: 31px; height: 35px; grid-column: 6; }
.card p { margin: 0; font-size: 33px; line-height: 42px; letter-spacing: -.1px; white-space: nowrap; }
.rev { color: #36812a; }
.cost { color: #ea3323; letter-spacing: .15px; }
.card small { margin-top: 41px; font-size: 17.4px; line-height: 20px; letter-spacing: .77px; text-align: right; }
.slot { background: #282c34; }
.dragged {
  position: absolute;
  left: 1415px;
  top: 912px;
  width: 514px;
  height: 272px;
  padding: 0 2px 2px;
  background: #7fb0c1;
  opacity: .9;
  box-shadow: 0 10px 40px rgba(0, 0, 0, .35);
}
.dragged .card { background: #f8eee0; }

/* dock */
.dock {
  display: flex;
  align-items: flex-start;
  flex: none;
  position: relative;
  width: 2671px;
  height: 144px;
  margin: 14px 0 0 105px;
  padding: 0 0 0 3px;
  border: 2px solid #5d3b42;
  border-radius: 40px;
  background: linear-gradient(#38161c, #45151f);
}
.app {
  position: relative;
  display: flex;
  justify-content: center;
  width: 121.5px;
  height: 140px;
  flex: none;
  padding-top: 11px;
}
.app svg { width: 108px; height: 108px; }
.app.on::after {
  content: "";
  position: absolute;
  left: 56px;
  bottom: 2px;
  width: 8px;
  height: 8px;
  border-radius: 50%;
  background: #c497a0;
}
.rule { width: 2px; height: 108px; margin: 16px 26px 0; flex: none; background: #74525a; }
.rule + .app { margin-left: .5px; }
.badge {
  position: absolute;
  left: 40px;
  top: 9px;
  width: 80px;
  height: 43px;
  border-radius: 22px;
  background: #dd4a3b;
  box-shadow: 0 1px 3px rgba(0, 0, 0, .4);
  color: #fff;
  font-size: 24px;
  letter-spacing: -1.1px;
  line-height: 43px;
  text-align: center;
}
.badge.one { left: 77px; width: 43px; letter-spacing: 0; font-size: 25px; }
.badge.mark i { display: block; width: 5px; height: 5px; margin: 20px auto; border-radius: 50%; background: #fff; }
.prompt { fill: #fff; font: bold 21px "Liberation Mono", monospace; }
.month { fill: #fff; font-size: 17px; font-weight: 600; text-anchor: middle; }
.day { fill: #1d1d1f; font-size: 57px; font-weight: 300; letter-spacing: -2.500px; text-anchor: middle; }
.cvname { font-size: 5px; font-weight: 700; }
.pdf { fill: #6b6b6b; font-size: 14px; text-anchor: middle; }
```
